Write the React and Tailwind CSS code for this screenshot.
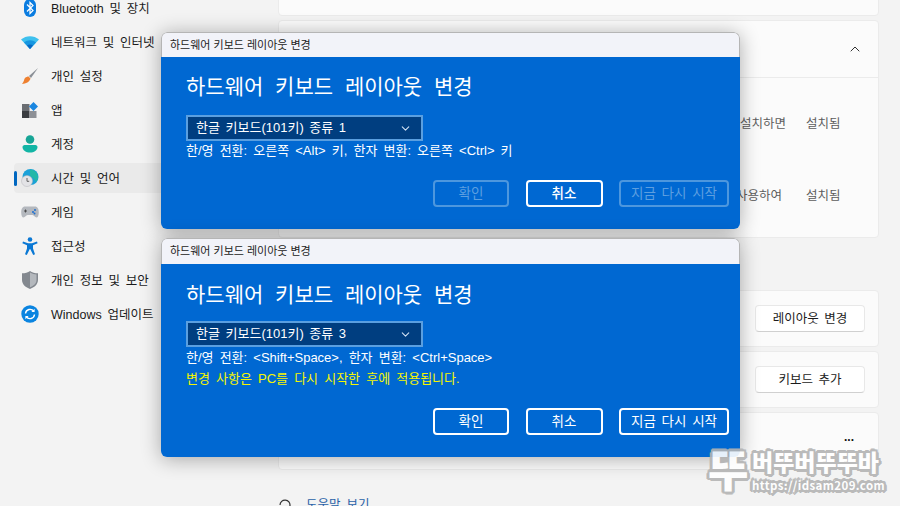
import React from "react";
import { ChevronDown, ChevronUp } from "lucide-react";

const FONT = "font-['Liberation_Sans','Noto_Sans_CJK_KR',sans-serif]";

const BluetoothIcon = () => (
  <svg width="14" height="18" viewBox="0 0 14 18">
    <rect x="1" y="0" width="12" height="18" rx="6" fill="#0a7ce0" />
    <path d="M4 5.500l6 6-3 3V3.500l3 3-6 6" fill="none" stroke="#fff" strokeWidth="1.200" />
  </svg>
);

const WifiIcon = () => (
  <svg width="18" height="14" viewBox="0 0 18 14">
    <path d="M0 4.500C5 0 13 0 18 4.500L9 14z" fill="#3ec0ee" />
    <path d="M3 7.500C6.500 4.600 11.500 4.600 15 7.500L9 14z" fill="#1796e0" />
    <path d="M6 10.500C7.800 9.300 10.200 9.300 12 10.500L9 14z" fill="#0868c4" />
  </svg>
);

const BrushIcon = () => (
  <svg width="18" height="18" viewBox="0 0 18 18">
    <path d="M17 1L8 9l2 2z" fill="#8a8f96" />
    <path d="M7.500 9.500l2 2C8.500 15 5 16.500 1 17c2-2 2-5 3-6 1-1 2.500-1.500 3.500-1.500z" fill="#ee8030" />
  </svg>
);

const AppsIcon = () => (
  <svg width="16" height="16" viewBox="0 0 16 16">
    <rect x="0" y="2" width="7.500" height="7" fill="#6a6d72" />
    <rect x="0" y="9" width="7.500" height="7" fill="#3a3c40" />
    <rect x="7.500" y="9" width="7" height="7" fill="#8d9096" />
    <path d="M11.500 0L16 4.500 11.500 9 7 4.500z" fill="#1a86e0" />
  </svg>
);

const AccountIcon = () => (
  <svg width="16" height="18" viewBox="0 0 16 18">
    <circle cx="8" cy="4.500" r="4.300" fill="#17a596" />
    <path d="M0.500 12c0-1 1-2 2-2h11c1 0 2 1 2 2 0 3.500-3.500 5.500-7.500 5.500S0.500 15.500 0.500 12z" fill="#12b5a5" />
  </svg>
);

const ClockGlobeIcon = () => (
  <svg width="18" height="18" viewBox="0 0 18 18">
    <circle cx="9.500" cy="8" r="8" fill="#1ba1d8" />
    <path d="M9 0.500c4 0 8 3 8 7.500 0 2-1 4-2 5-1-3-4-5-6-6z" fill="#22b8a8" />
    <circle cx="6" cy="12" r="5.500" fill="#e3e3e6" stroke="#b5b5ba" strokeWidth="0.500" />
    <path d="M6 9v3.300h2.200" fill="none" stroke="#555" strokeWidth="0.900" />
  </svg>
);

const GameIcon = () => (
  <svg width="18" height="12" viewBox="0 0 18 12">
    <path d="M4 0.500h10c2.500 0 3.800 2.500 3.800 6 0 3-1 5-2.300 5-1.700 0-2.500-2.500-4-2.500H6.500c-1.500 0-2.300 2.500-4 2.500C1.200 11.500 0.200 9.500 0.200 6.500c0-3.500 1.300-6 3.800-6z" fill="#b4b8be" />
    <path d="M3 5h3M4.500 3.500v3" stroke="#444" strokeWidth="0.900" />
    <circle cx="12" cy="6" r="1" fill="#1c6fd0" />
    <circle cx="14" cy="4" r="1" fill="#1c6fd0" />
    <circle cx="13.500" cy="7.500" r="1" fill="#1c6fd0" />
  </svg>
);

const AccessIcon = () => (
  <svg width="16" height="18" viewBox="0 0 16 18">
    <circle cx="8" cy="2.500" r="2.300" fill="#0a78d4" />
    <path d="M1 4.500l5 1.800h4l5-1.800.6 1.700-4.600 2v3.300l2 5.800-1.800.7L8.200 12h-.4l-3 6-1.800-.7 2-5.800V8.200L.4 6.200z" fill="#0a78d4" />
  </svg>
);

const ShieldIcon = () => (
  <svg width="16" height="18" viewBox="0 0 16 18">
    <path d="M8 0c2 1.500 5 2.300 8 2.300V9c0 4.500-4 7.500-8 9-4-1.500-8-4.500-8-9V2.300C3 2.300 6 1.500 8 0z" fill="#83888f" />
    <path d="M8 1.500c2 1.200 4.500 2 6.500 2V9c0 3.500-3 6-6.500 7.300z" fill="#b4b8bd" />
  </svg>
);

const UpdateIcon = () => (
  <svg width="18" height="18" viewBox="0 0 18 18">
    <circle cx="9" cy="9" r="8.700" fill="#0a84e0" />
    <path d="M4.500 8.500A4.600 4.600 0 0 1 12.800 6.300M13.500 9.500A4.600 4.600 0 0 1 5.200 11.700" fill="none" stroke="#fff" strokeWidth="1.400" />
    <path d="M13.600 3.800v3.200h-3.200zM4.400 14.200v-3.200h3.200z" fill="#fff" />
  </svg>
);

const NAV_ITEMS = [
  { label: "Bluetooth 및 장치", icon: <BluetoothIcon /> },
  { label: "네트워크 및 인터넷", icon: <WifiIcon /> },
  { label: "개인 설정", icon: <BrushIcon /> },
  { label: "앱", icon: <AppsIcon /> },
  { label: "계정", icon: <AccountIcon /> },
  { label: "시간 및 언어", icon: <ClockGlobeIcon />, active: true },
  { label: "게임", icon: <GameIcon /> },
  { label: "접근성", icon: <AccessIcon /> },
  { label: "개인 정보 및 보안", icon: <ShieldIcon /> },
  { label: "Windows 업데이트", icon: <UpdateIcon /> },
];

const Sidebar = () => (
  <aside className="w-[278px] shrink-0 pl-[14px] pr-[6px] -mt-[7px] flex flex-col gap-1">
    {NAV_ITEMS.map((item) => (
      <div
        key={item.label}
        className={`relative h-[30px] flex items-center rounded ${item.active ? "bg-[#eaeaea]" : ""}`}
      >
        {item.active && <span className="absolute left-0 top-[8px] h-[15px] w-[3px] rounded bg-[#0067c0]" />}
        <span className="w-[37px] pr-[5px] flex justify-center items-center">{item.icon}</span>
        <span className="pt-[2px] text-[12.500px] [word-spacing:2.300px] text-[#1b1b1b] whitespace-nowrap">{item.label}</span>
      </div>
    ))}
  </aside>
);

const Card = ({ className, children }) => (
  <div className={`rounded border border-[#ebebeb] bg-[#fbfbfb] ${className}`}>{children}</div>
);

const SettingButton = ({ children }) => (
  <button className="h-[27px] w-[110px] pt-[1px] rounded border border-[#e8e8e8] border-b-[#d0d0d0] bg-white text-[12.500px] [word-spacing:2px] text-[#1b1b1b]">
    {children}
  </button>
);

const Content = () => (
  <main className="w-[601px] -mt-[30px] flex flex-col">
    <Card className="h-[46px] shrink-0 flex items-end px-[22px] pb-[27px]">
      <span className="text-[12.500px] leading-[18px] [word-spacing:2.500px] text-[#555]">Windows 기능은 해당 언어로 표시됩니다</span>
    </Card>
    <Card className="h-[218px] shrink-0 mt-1 flex flex-col">
      <div className="h-[57px] border-b border-[#ebebeb] flex justify-end items-center pr-[15px]">
        <ChevronUp size={16} strokeWidth={1.500} className="text-[#333]" />
      </div>
      <div className="flex-1 pr-[36px] text-[12.500px] text-[#5d5d5d]">
        <div className="h-[72px] pt-[37px] flex justify-end gap-5">
          <span>설치하면</span>
          <span className="w-[36px]">설치됨</span>
        </div>
        <div className="pt-[37px] flex justify-end gap-6">
          <span>사용하여</span>
          <span className="w-[36px]">설치됨</span>
        </div>
      </div>
    </Card>
    <Card className="h-[57px] shrink-0 mt-[52px] flex items-center justify-end pr-[13px]">
      <SettingButton>레이아웃 변경</SettingButton>
    </Card>
    <Card className="h-[57px] shrink-0 mt-1 flex items-center justify-end pr-[13px]">
      <SettingButton>키보드 추가</SettingButton>
    </Card>
    <Card className="h-[58px] shrink-0 mt-1 flex justify-end pr-[24px] pt-[18px]">
      <span className="text-[12px] leading-none font-bold text-[#111]">...</span>
    </Card>
    <div className="mt-[26px] flex items-center gap-[14px] text-[12.500px] [word-spacing:2.500px] text-[#2a62a8]">
      <svg width="14" height="14" viewBox="0 0 14 14" fill="none" stroke="#333" strokeWidth="1.200">
        <path d="M2 7a5 5 0 1 1 4 5l-3 1.500V10" />
      </svg>
      <span>도움말 보기</span>
    </div>
  </main>
);

const DialogButton = ({ children, state, className }) => {
  const look =
    state === "disabled"
      ? "border-[#4d97de] text-[#5d9fe0]"
      : state === "focus"
        ? "border-white text-white font-medium"
        : "border-white text-white";
  return (
    <button className={`h-[27px] pt-[2px] rounded border-2 text-[13.500px] [word-spacing:2px] ${look} ${className}`}>{children}</button>
  );
};

const Dialog = ({ top, height, selected, info, notice, buttons }) => (
  <section
    className={`absolute left-[161px] w-[579px] rounded-md overflow-hidden shadow-[0_2px_20px_rgba(0,0,0,0.32)] flex flex-col ${top} ${height}`}
  >
    <header
      className={`${notice ? "h-[26px]" : "h-[25px]"} shrink-0 bg-[#f2f3f9] border border-b-0 border-[#b5b5b5] rounded-t-md flex items-center pl-2 text-[11px] text-[#222]`}
    >
      하드웨어 키보드 레이아웃 변경
    </header>
    <div className="flex-1 bg-[#0068d2] pl-[25px] pr-[11px] flex flex-col">
      <h2 className={`${notice ? "mt-[16px]" : "mt-[15px]"} h-[30px] leading-[30px] text-[21px] [word-spacing:6px] text-white`}>
        하드웨어 키보드 레이아웃 변경
      </h2>
      <div
        className={`${notice ? "mt-[11px]" : "mt-[13px]"} h-[26px] w-[237px] border-2 border-[#5a9fe0] bg-[#003e80] flex items-center justify-between pl-2 pr-[9px] text-[13px] [word-spacing:2px] text-white`}
      >
        <span>{selected}</span>
        <ChevronDown size={13} className="text-[#cfe0f2]" />
      </div>
      <p className={`${notice ? "mt-[2px]" : "mt-[1px]"} h-[18px] leading-[18px] text-[13px] [word-spacing:2.500px] text-white`}>{info}</p>
      {notice && <p className="mt-[3px] h-[18px] leading-[18px] text-[13px] [word-spacing:2.500px] text-[#f5f500]">{notice}</p>}
      <div className="mt-[20px] flex justify-end gap-[16.500px]">
        {buttons.map((b) => (
          <DialogButton key={b.label} state={b.state} className={b.width}>
            {b.label}
          </DialogButton>
        ))}
      </div>
    </div>
  </section>
);

const HALO =
  "[text-shadow:2px_0_0_#b4b4b4,-2px_0_0_#b4b4b4,0_2px_0_#b4b4b4,0_-2px_0_#b4b4b4,2px_2px_0_#b4b4b4,-2px_2px_0_#b4b4b4,2px_-2px_0_#b4b4b4,-2px_-2px_0_#b4b4b4,3px_1px_0_#b4b4b4,-3px_1px_0_#b4b4b4,1px_3px_0_#b4b4b4,-1px_-3px_0_#b4b4b4]";

const Watermark = () => (
  <div className="absolute left-[706px] top-[444px] w-[190px] h-[56px] select-none opacity-90 font-['Noto_Sans_CJK_KR',sans-serif]">
    <span className={`absolute left-[2px] top-[-4px] text-[44px] leading-[56px] font-black text-white ${HALO}`}>
      뚜
    </span>
    <span className={`absolute left-[46px] top-[4px] text-[23px] leading-[26px] font-black text-white whitespace-nowrap ${HALO}`}>
      버뚜버뚜뚜바
    </span>
    <span className={`absolute left-[46px] top-[33px] text-[11.500px] leading-[16px] font-bold text-white whitespace-nowrap tracking-[0.4px] ${HALO}`}>
      https://idsam209.com
    </span>
  </div>
);

export default function App() {
  return (
    <div className={`relative w-[900px] h-[506px] overflow-hidden bg-[#f3f3f3] flex ${FONT}`}>
      <Sidebar />
      <Content />
      <Dialog
        top="top-[32px]"
        height="h-[197px]"
        selected="한글 키보드(101키) 종류 1"
        info="한/영 전환: 오른쪽 <Alt> 키, 한자 변환: 오른쪽 <Ctrl> 키"
        buttons={[
          { label: "확인", state: "disabled", width: "w-[76px]" },
          { label: "취소", state: "focus", width: "w-[77px]" },
          { label: "지금 다시 시작", state: "disabled", width: "w-[110px]" },
        ]}
      />
      <Dialog
        top="top-[238px]"
        height="h-[219px]"
        selected="한글 키보드(101키) 종류 3"
        info="한/영 전환: <Shift+Space>, 한자 변환: <Ctrl+Space>"
        notice="변경 사항은 PC를 다시 시작한 후에 적용됩니다."
        buttons={[
          { label: "확인", state: "normal", width: "w-[76px]" },
          { label: "취소", state: "normal", width: "w-[77px]" },
          { label: "지금 다시 시작", state: "normal", width: "w-[110px]" },
        ]}
      />
      <Watermark />
    </div>
  );
}
